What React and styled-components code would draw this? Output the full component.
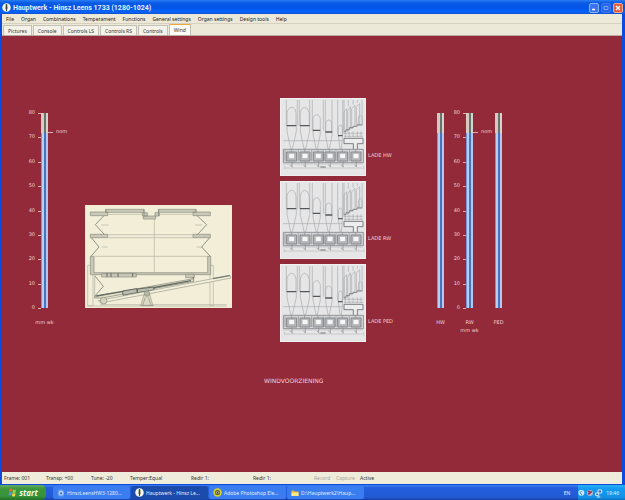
import React from "react";
import styled, { createGlobalStyle } from "styled-components";

const Global = createGlobalStyle`
  * { box-sizing: border-box; }
  html, body { margin: 0; }
  body { font: 5px/8px "Noto Sans", "Liberation Sans", sans-serif; color: #3a3833; }
  button { font: inherit; color: inherit; border: 0; padding: 0; background: none; white-space: nowrap; }
`;

const Desktop = styled.div`
  min-height: 100vh;
  display: flex;
  flex-direction: column;
  background: #0c4be0;
`;

const AppWindow = styled.main`
  flex: 1;
  display: flex;
  flex-direction: column;
  padding: 0 3px 1px 2px;
`;

const TitleBar = styled.header`
  height: 14px;
  margin: 0 -3px 0 -2px;
  padding: 1px 2px 0 2px;
  display: flex;
  align-items: center;
  gap: 2px;
  background: linear-gradient(#2a7df5 0, #0a5ae4 3px, #0355e8 8px, #0664fb 12px, #1450c8 14px);
`;

const Title = styled.h1`
  flex: 1;
  margin: 0;
  font: bold 7px/10px Roboto, "Liberation Sans", sans-serif;
  color: #e4efff;
`;

const WindowButton = styled.button`
  width: 10px;
  height: 10px;
  display: flex;
  border: 1px solid ${(p) => (p.$close ? "#f0a896" : p.$dim ? "#3c78ec" : "#8cb2f8")};
  border-radius: 2px;
  background: ${(p) => (p.$close ? "#e35a3c" : p.$dim ? "#2765e8" : "#3b74ee")};
`;

const MenuBar = styled.nav`
  height: 10px;
  padding: 0 4px;
  display: flex;
  align-items: center;
  gap: 7px;
  background: #ece9d8;
  border-bottom: 1px solid #d5d0bf;
`;

const MenuItem = styled.button`
  color: #24231f;
`;

const TabStrip = styled.div`
  height: 12px;
  padding-left: 1px;
  display: flex;
  align-items: flex-end;
  gap: 1px;
  background: #ece9d8;
  border-bottom: 1px solid #b9a9a0;
`;

const Tab = styled.button`
  height: ${(p) => (p.$active ? 11 : 10)}px;
  && {
    padding: 0 4px;
    background: ${(p) => (p.$active ? "#fcfcf9" : "#f4f2e9")};
    border: 1px solid #c2c0b4;
    border-bottom: 0;
    border-top-color: ${(p) => (p.$active ? "#f0a83c" : "#c2c0b4")};
    border-radius: 1px 1px 0 0;
  }
`;

const Stage = styled.section`
  flex: 1;
  display: grid;
  grid-template-columns: 83fr 179fr 173fr 185fr;
  align-items: start;
  padding-top: 62px;
  background: #932a39;
  color: #f0d2d4;
  font-family: "DejaVu Sans", Verdana, sans-serif;
`;

const GaugeGroup = styled.div`
  display: flex;
  padding-top: 15px;
  padding-left: ${(p) => p.$indent}px;
`;

const Scale = styled.ol`
  width: ${(p) => p.$width}px;
  height: 196px;
  margin: 0;
  padding: 0;
  list-style: none;
  display: flex;
  flex-direction: column;
  justify-content: space-between;
`;

const Tick = styled.li`
  height: 1px;
  display: flex;
  align-items: flex-end;
  justify-content: flex-end;
  gap: 3px;
  line-height: 4px;

  &::after {
    content: "";
    width: 3px;
    height: 1px;
    background: #dcaeb2;
  }
`;

const TubeColumn = styled.div`
  width: 7px;
  display: flex;
  flex-direction: column;
  align-items: center;
  white-space: nowrap;
`;

const Tube = styled.div`
  width: 7px;
  height: 195px;
  margin-bottom: 10px;
  display: flex;
  flex-direction: column;
  background: linear-gradient(90deg, #d8c9c1 0 3px, #66736f 3px 5px, #d5d4cc 5px);
`;

const Fluid = styled.div`
  margin-top: auto;
  background: linear-gradient(90deg, #7893d8 0 1px, #b6cff2 1px 3px, #4676bb 3px 5px, #b5c6f1 5px);
`;

const Nominal = styled.div`
  width: ${(p) => p.$width}px;
  height: 8px;
  margin-top: 14px;
  display: flex;
  align-items: center;
  gap: 3px;
  line-height: 6px;

  &::before {
    content: "";
    width: 5px;
    height: 1px;
    margin-top: 3px;
    background: #dcaeb2;
  }
`;

const BellowsPanel = styled.figure`
  margin: 107px 0 0;
  svg { display: block; }
`;

const ChestColumn = styled.div`
  display: flex;
  flex-direction: column;
`;

const ChestList = styled.div`
  display: flex;
  flex-direction: column;
  gap: 5px;
  padding-left: 16px;
`;

const Chest = styled.figure`
  margin: 0;
  display: flex;
  align-items: flex-end;
  gap: 2px;
  svg { display: block; flex: none; }
`;

const ChestLabel = styled.figcaption`
  padding-bottom: 17px;
  white-space: nowrap;
`;

const StageTitle = styled.h2`
  margin: 34px 0 0;
  font-size: 6px;
  font-weight: normal;
  line-height: 10px;
`;

const StatusBar = styled.footer`
  height: 12px;
  padding-left: 2px;
  display: grid;
  grid-template-columns: 42px 45px 39px 61px 62px 61px 22px 24px 1fr;
  align-items: center;
  white-space: nowrap;
  background: #efecdc;
`;

const StatusItem = styled.span`
  color: ${(p) => (p.$muted ? "#aaa79c" : "#35332e")};
`;

const Taskbar = styled.div`
  height: 15px;
  display: flex;
  align-items: stretch;
  gap: 1px;
  background: linear-gradient(#3a80f0 0, #245edc 3px, #225ad6 12px, #1941a5);
`;

const StartButton = styled.button`
  width: 46px;
  margin-right: 6px;
  display: flex;
  align-items: center;
  justify-content: center;
  gap: 2px;
  border-radius: 0 5px 5px 0;
  && {
    background: linear-gradient(#62ae5e, #3b953a 4px, #37943a 11px, #236f26);
    color: #f0fbea;
    font: italic bold 8px/12px "Open Sans", "Noto Sans", sans-serif;
  }
`;

const Task = styled.button`
  flex: 0 1 77px;
  min-width: 0;
  height: 13px;
  margin-top: 1px;
  display: flex;
  align-items: center;
  gap: 2px;
  border-radius: 2px;
  && {
    padding: 0 4px;
    color: #e2ecff;
    background: ${(p) => (p.$active ? "#1c4cab" : "#397df0")};
  }
`;

const Tray = styled.div`
  margin-left: auto;
  display: flex;
  align-items: center;
  gap: 8px;
  color: #e4f0ff;
`;

const TrayIcons = styled.div`
  align-self: stretch;
  display: flex;
  align-items: center;
  gap: 2px;
  padding-right: 6px;
  background: linear-gradient(#28b0f4, #149af0 4px, #1392e8 12px, #0d72c4);
`;

const Clock = styled.time`
  padding-left: 1px;
`;

const OrganIcon = () => (
  <svg width="9" height="9" viewBox="0 0 18 18" aria-hidden="true">
    <circle cx="9" cy="9" r="8.5" fill="#f5f6ef" />
    <path d="M7 3h4v7l-1 5H8l-1-5z" fill="#7d8c66" />
    <path d="M9 2v14M7 10h4" stroke="#26362a" strokeWidth="1.5" />
  </svg>
);

const Flag = () => (
  <svg width="9" height="9" viewBox="0 0 18 18" aria-hidden="true">
    <path d="M3 2q3-2 6 0L8 8Q5 6 2 8z" fill="#f06532" />
    <path d="M10 3q3 2 6 0l-1 6q-3 2-6 0z" fill="#8fd44d" />
    <path d="M2 9q3-2 6 0l-1 6q-3-2-6 0z" fill="#5b91ee" />
    <path d="M9 10q3 2 6 0l-1 6q-3 2-6 0z" fill="#f8d642" />
  </svg>
);

const SketchIcon = () => (
  <svg width="8" height="8" viewBox="0 0 16 16" aria-hidden="true">
    <path d="M2 1h9l3 3v11H2z" fill="#5c94ee" />
    <circle cx="8" cy="8" r="5" fill="#a9d0fb" />
    <path d="M4 10l4-6 4 6-4 2z" fill="#4974bf" stroke="#e5f1ff" />
  </svg>
);

const PhotoIcon = () => (
  <svg width="9" height="9" viewBox="0 0 18 18" aria-hidden="true">
    <circle cx="9" cy="9" r="8.5" fill="#d9cf2e" />
    <circle cx="9" cy="9" r="5" fill="#4a5730" />
    <path d="M5 9q4-6 8 0-4 5-8 0" fill="#f1ead0" />
    <circle cx="9" cy="9" r="2" fill="#3c3824" />
  </svg>
);

const FolderIcon = () => (
  <svg width="8" height="8" viewBox="0 0 16 16" aria-hidden="true">
    <path d="M1 3h5l2 2h7v9H1z" fill="#e6b93d" />
    <path d="M1 7h14v7H1z" fill="#fbe68b" />
  </svg>
);

const MinimizeIcon = () => (
  <svg width="8" height="8" viewBox="0 0 8 8" aria-hidden="true"><path d="M2 5.5h3" stroke="#fff" strokeWidth="1.5" /></svg>
);
const MaximizeIcon = () => (
  <svg width="8" height="8" viewBox="0 0 8 8" aria-hidden="true"><path d="M2 2.5h4v3H2z" fill="none" stroke="#7ba6f6" /></svg>
);
const CloseIcon = () => (
  <svg width="8" height="8" viewBox="0 0 8 8" aria-hidden="true"><path d="M2 2l4 4M6 2L2 6" stroke="#fff" strokeWidth="1.4" /></svg>
);

const TrayGlyphs = () => (
  <svg width="25" height="10" viewBox="0 0 75 30" aria-hidden="true">
    <circle cx="10" cy="14" r="9" fill="#c8e8fc" />
    <path d="M12 8l-6 6 6 7" fill="none" stroke="#3b83d0" strokeWidth="3" />
    <circle cx="36" cy="15" r="9" fill="#a9b8d4" />
    <path d="M31 19l10-9M31 9l5 5" stroke="#a52d4d" strokeWidth="5" />
    <path d="M53 15h9v8h-9zM60 6h11v9H60z" fill="#2a68b9" stroke="#d8ecff" strokeWidth="3" />
    <path d="M57 27h10" stroke="#d8ecff" strokeWidth="3" />
  </svg>
);

const feet = [49, 89, 129, 164, 202, 242];

const ChestDrawing = () => (
  <svg width="86" height="78" viewBox="15 18 258 234" preserveAspectRatio="none" role="img" aria-label="Wind chest section">
    <path d="M15 18h258v234H15z" fill="#e6e6e7" />
    <path d="M16 19h256v232H16z" fill="none" stroke="#f8f6f6" strokeWidth="2" />
    <g fill="none" stroke="#a9aaad" strokeWidth="2">
      <path d="M34 24v78M67 24v78M73 24v78M104 24v78M112 24v90M145 24v92M151 24v96M171 24v96M188 24v104M203 24v104M207 24v92M220 24v18M234 24v14M247 24v8M261 24v72" />
      <path d="M36 100V64q3-18 14-18t13 18v36M76 100V64q3-18 13-18t14 18v36M114 114V82q2-14 11-14t11 14v32M152 119V94q2-10 9-10t9 10v25M190 130v-24q2-7 6-7t6 7v24" />
      <path d="M36 102v16l11 52h5l12-52v-16M76 102v16l11 52h5l12-52v-16M114 116v10l9 44h4l9-44v-10M152 121v10l7 39h4l8-39v-10M190 131l5 39h4l4-39" />
      <path d="M207 60l8-10v66l-8 10zM218 58l8-14v66l-8 9zM230 50l10-10v62l-10 8zM244 44l10-9v62h-10zM250 82q0-12 6-12t6 12v16h-12z" />
      <path d="M24 146h178M207 124h57M207 133h57M211 121v15M222 119v16M234 118v17M247 118v17M258 118v17" />
      <path d="M24 216h240M30 228h232M28 222v10M266 222v10" strokeWidth="1.5" />
    </g>
    <path d="M35 101h29M75 101h29M113 115h23M151 120h21M189 131h14" stroke="#55575a" strokeWidth="4" />
    <path d="M206 118h7v-5h10v-6h11v-4h12v-4h16" fill="none" stroke="#85878b" strokeWidth="3" />
    <path d="M207 139h57v16h-17v18h-12v-18h-28z" fill="#ededee" stroke="#7c7e81" strokeWidth="3" />
    <path d="M25 172h240v40H25z" fill="#d5d6d7" stroke="#939598" strokeWidth="3" />
    {feet.map((x) => (
      <g key={x} fill="none" stroke="#85878a" strokeWidth="2">
        <path d={`M${x - 14} 180h30v27h-30z`} fill="#b8babc" strokeWidth="3" />
        <path d={`M${x - 8} 184h18v16h-18z`} fill="#f6f6f6" stroke="#a0a2a4" />
        <path d={`M${x - 19} 175v32M${x} 173v7M${x + 2} 209v15`} />
        <path d={`M${x - 4} 219l8 6`} />
      </g>
    ))}
    <path d="M136 225h16" stroke="#8c8e91" strokeWidth="4" />
  </svg>
);

const BellowsDrawing = () => (
  <svg width="147" height="103" viewBox="15 15 441 309" role="img" aria-label="Bellows section">
    <path d="M15 15h441v309H15z" fill="#eee7cd" />
    <path d="M17 17h437v305H17z" fill="#f2eed8" />
    <g fill="none" stroke="#b3b2a3" strokeWidth="2">
      <path d="M83 43h102M240 43h98M83 104h256M83 113h256M44 169h339M223 52v164" />
      <path d="M22 318h418M23 196h16v121H23zM390 196h10v121h-10zM64 75h22M345 75h22M65 141h18M350 141h18" />
      <path d="M44 225v64M60 314h380" />
    </g>
    <g fill="#cbc9b6" stroke="#878b80" strokeWidth="2">
      <path d="M77 28h115v9H77zM235 28h113v9H235zM31 36h52v11H31zM339 36h52v11h-52zM31 103h52v10H31zM339 103h52v10h-52z" />
      <path d="M187 38h15v10h-15zM225 38h13v10h-13zM190 48h37v9h-37z" />
      <path d="M31 169h11v49h341v-49h9v55H31z" />
      <path d="M65 221h104v10H65zM317 223h26v10h-26z" />
    </g>
    <g fill="none" stroke="#8d9487" strokeWidth="3">
      <path d="M72 47L46 74l27 29M351 47l29 27-27 29M34 113l23 28-24 28M389 113l-24 28 26 28M45 228l25 31-26 30" />
      <path d="M192 28v20M236 28v20M77 28v9M348 28v9" />
    </g>
    <path d="M81 220v11M93 220v11M114 220v11M158 219v12M340 231v10h-7" stroke="#646b64" strokeWidth="3" fill="none" />
    <path d="M44 289l297-53v8L66 294H44z" fill="#e5dfc4" stroke="#7b8077" strokeWidth="2" />
    <path d="M49 288l80-14M215 264l118-22" stroke="#626a64" strokeWidth="4" />
    <path d="M128 273l42-7 2 12-43 8zM172 267l50-6v9l-50 8z" fill="#b9bcae" stroke="#5f665f" strokeWidth="3" />
    <path d="M55 302l395-76 3 8-391 75z" fill="#f4efd9" stroke="#979c8d" strokeWidth="2" />
    <path d="M399 236l50-9" stroke="#737b74" strokeWidth="4" />
    <circle cx="71" cy="302" r="10" fill="#d7d2bd" stroke="#8a8f85" strokeWidth="2" />
    <path d="M192 283h17l10 34h-37z" fill="#dfdac4" stroke="#9a9f92" strokeWidth="2" />
    <path d="M196 292l-8 24M205 292l8 24M182 316h38" stroke="#858c84" strokeWidth="2" />
    <circle cx="201" cy="281" r="8" fill="#b7b7a6" stroke="#858a7e" strokeWidth="2" />
  </svg>
);

const FluidLevel = ({ level }) => <Fluid style={{ height: `${level}%` }} />;

const WindTube = ({ level = 90, captions = [] }) => (
  <TubeColumn>
    <Tube><FluidLevel level={level} /></Tube>
    {captions.map((c) => <span key={c}>{c}</span>)}
  </TubeColumn>
);

const PressureScale = ({ width }) => (
  <Scale $width={width}>
    {[80, 70, 60, 50, 40, 30, 20, 10, 0].map((n) => <Tick key={n}>{n}</Tick>)}
  </Scale>
);

const menus = ["File", "Organ", "Combinations", "Temperament", "Functions", "General settings", "Organ settings", "Design tools", "Help"];
const tabs = ["Pictures", "Console", "Controls LS", "Controls RS", "Controls", "Wind"];
const status = ["Frame: 001", "Transp: +00", "Tune: -20", "Temper:Equal", "Redir 1:", "Redir 1:", "Record", "Capture", "Active"];

export default function App() {
  return (
    <Desktop>
      <Global />
      <AppWindow>
        <TitleBar>
          <OrganIcon />
          <Title>Hauptwerk - Hinsz Leens 1733 (1280-1024)</Title>
          <WindowButton aria-label="Minimize"><MinimizeIcon /></WindowButton>
          <WindowButton aria-label="Maximize" $dim><MaximizeIcon /></WindowButton>
          <WindowButton aria-label="Close" $close><CloseIcon /></WindowButton>
        </TitleBar>
        <MenuBar>{menus.map((m) => <MenuItem key={m}>{m}</MenuItem>)}</MenuBar>
        <TabStrip role="tablist">
          {tabs.map((t) => (
            <Tab key={t} role="tab" aria-selected={t === "Wind"} $active={t === "Wind"}>{t}</Tab>
          ))}
        </TabStrip>
        <Stage>
          <GaugeGroup $indent={25}>
            <PressureScale width={14} />
            <WindTube captions={["mm wk"]} />
            <Nominal $width={22}>nom</Nominal>
          </GaugeGroup>
          <BellowsPanel><BellowsDrawing /></BellowsPanel>
          <ChestColumn>
            <ChestList>
              {["LADE HW", "LADE RW", "LADE PED"].map((label) => (
                <Chest key={label}>
                  <ChestDrawing />
                  <ChestLabel>{label}</ChestLabel>
                </Chest>
              ))}
            </ChestList>
            <StageTitle>WINDVOORZIENING</StageTitle>
          </ChestColumn>
          <GaugeGroup $indent={0}>
            <WindTube captions={["HW"]} />
            <PressureScale width={22} />
            <WindTube captions={["RW", "mm wk"]} />
            <Nominal $width={22}>nom</Nominal>
            <WindTube captions={["PED"]} />
          </GaugeGroup>
        </Stage>
        <StatusBar>
          {status.map((s, i) => (
            <StatusItem key={i} $muted={s === "Record" || s === "Capture"}>{s}</StatusItem>
          ))}
        </StatusBar>
      </AppWindow>
      <Taskbar>
        <StartButton><Flag />start</StartButton>
        <Task><SketchIcon />HinszLeensHW3-1280...</Task>
        <Task $active><OrganIcon />Hauptwerk - Hinsz Le...</Task>
        <Task><PhotoIcon />Adobe Photoshop Ele...</Task>
        <Task><FolderIcon />D:\Hauptwerk2\Haup...</Task>
        <Tray>
          <span>EN</span>
          <TrayIcons><TrayGlyphs /><Clock>19:46</Clock></TrayIcons>
        </Tray>
      </Taskbar>
    </Desktop>
  );
}
